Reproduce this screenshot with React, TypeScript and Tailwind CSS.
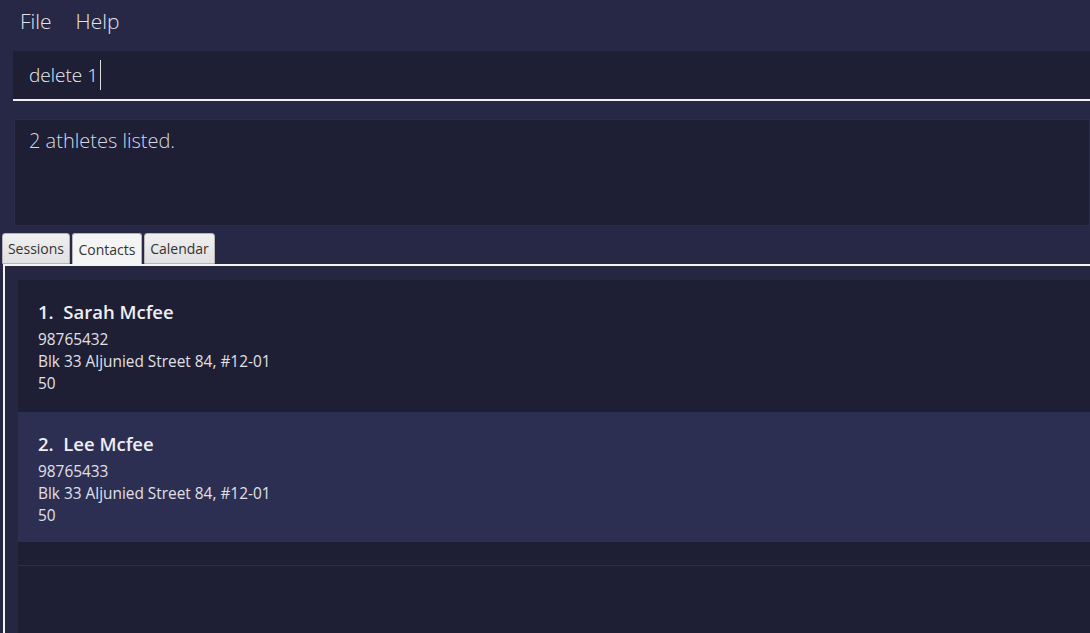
import React from 'react';

const athletes = [
  { name: 'Sarah Mcfee', phone: '98765432', address: 'Blk 33 Aljunied Street 84, #12-01', extra: '50' },
  { name: 'Lee Mcfee', phone: '98765433', address: 'Blk 33 Aljunied Street 84, #12-01', extra: '50' },
];

const font = "font-['Segoe_UI','Open_Sans','Noto_Sans',sans-serif]";

export default function App() {
  return (
    <div className={`w-[1090px] h-[633px] overflow-hidden bg-[#272846] flex flex-col ${font}`}>
      {/* Menu bar */}
      <div className="h-[43px] shrink-0 flex items-center gap-[24px] pl-[20px] text-[21px] font-light text-[#e2e2ea]">
        <span>File</span>
        <span>Help</span>
      </div>

      {/* Command box */}
      <div className="mt-[8px] ml-[13px] h-[50px] shrink-0 bg-[#1e1e34] border-b-2 border-[#f0f0f0] flex items-center pl-[16px] text-[19px] font-light text-[#e6eef8]">
        <span>delete 1</span>
        <span className="ml-[2px] w-[1px] h-[30px] bg-[#e0e0e0]" />
      </div>

      {/* Result display */}
      <div className="mt-[18px] ml-[14px] h-[107px] shrink-0 bg-[#1e1e34] border border-[#2b2c48] pl-[14px] pt-[6px] text-[20px] font-light text-[#d8d8e4]">
        2 athletes listed.
      </div>

      {/* Tabs */}
      <div className="mt-[7px] ml-[2px] flex gap-[2px] h-[31px] shrink-0 items-end">
        <div className="w-[68px] h-[31px] flex items-center justify-center rounded-t-[3px] border border-[#b5b5b5] bg-gradient-to-b from-[#f0f0f0] to-[#e0e0e0] text-[14px] text-[#333]">
          Sessions
        </div>
        <div className="w-[70px] h-[31px] flex items-center justify-center rounded-t-[3px] border border-[#b5b5b5] border-b-0 bg-[#f4f4f4] text-[14px] text-[#333]">
          Contacts
        </div>
        <div className="w-[71px] h-[31px] flex items-center justify-center rounded-t-[3px] border border-[#b5b5b5] bg-gradient-to-b from-[#f0f0f0] to-[#e0e0e0] text-[14px] text-[#333]">
          Calendar
        </div>
      </div>

      {/* Tab content */}
      <div className="ml-[3px] flex-1 border-t-2 border-l-2 border-[#f4f4f4] bg-[#25263f] pl-[13px] pt-[14px] flex flex-col">
        <div className="flex-1 flex flex-col bg-[#1e1e34]">
          {athletes.map((a, i) => (
            <div
              key={a.name}
              className={`h-[132px] pl-[20px] pt-[18px] flex flex-col border-b-2 border-[#1e1e34] ${i === 1 ? 'bg-[#2d2f52]' : 'bg-[#1e1e34]'}`}
            >
              <div className="text-[18.5px] font-semibold text-[#eeeef4] leading-[28px]">
                {i + 1}.&nbsp;&nbsp;{a.name}
              </div>
              <div className="text-[15.4px] text-[#e0e0e8] leading-[22px] mt-[3px]">{a.phone}</div>
              <div className="text-[15.4px] text-[#e0e0e8] leading-[22px]">{a.address}</div>
              <div className="text-[15.4px] text-[#e0e0e8] leading-[22px]">{a.extra}</div>
            </div>
          ))}
          <div className="h-[22px] border-b border-[#2c2d48]" />
          <div className="flex-1" />
        </div>
      </div>
    </div>
  );
}
